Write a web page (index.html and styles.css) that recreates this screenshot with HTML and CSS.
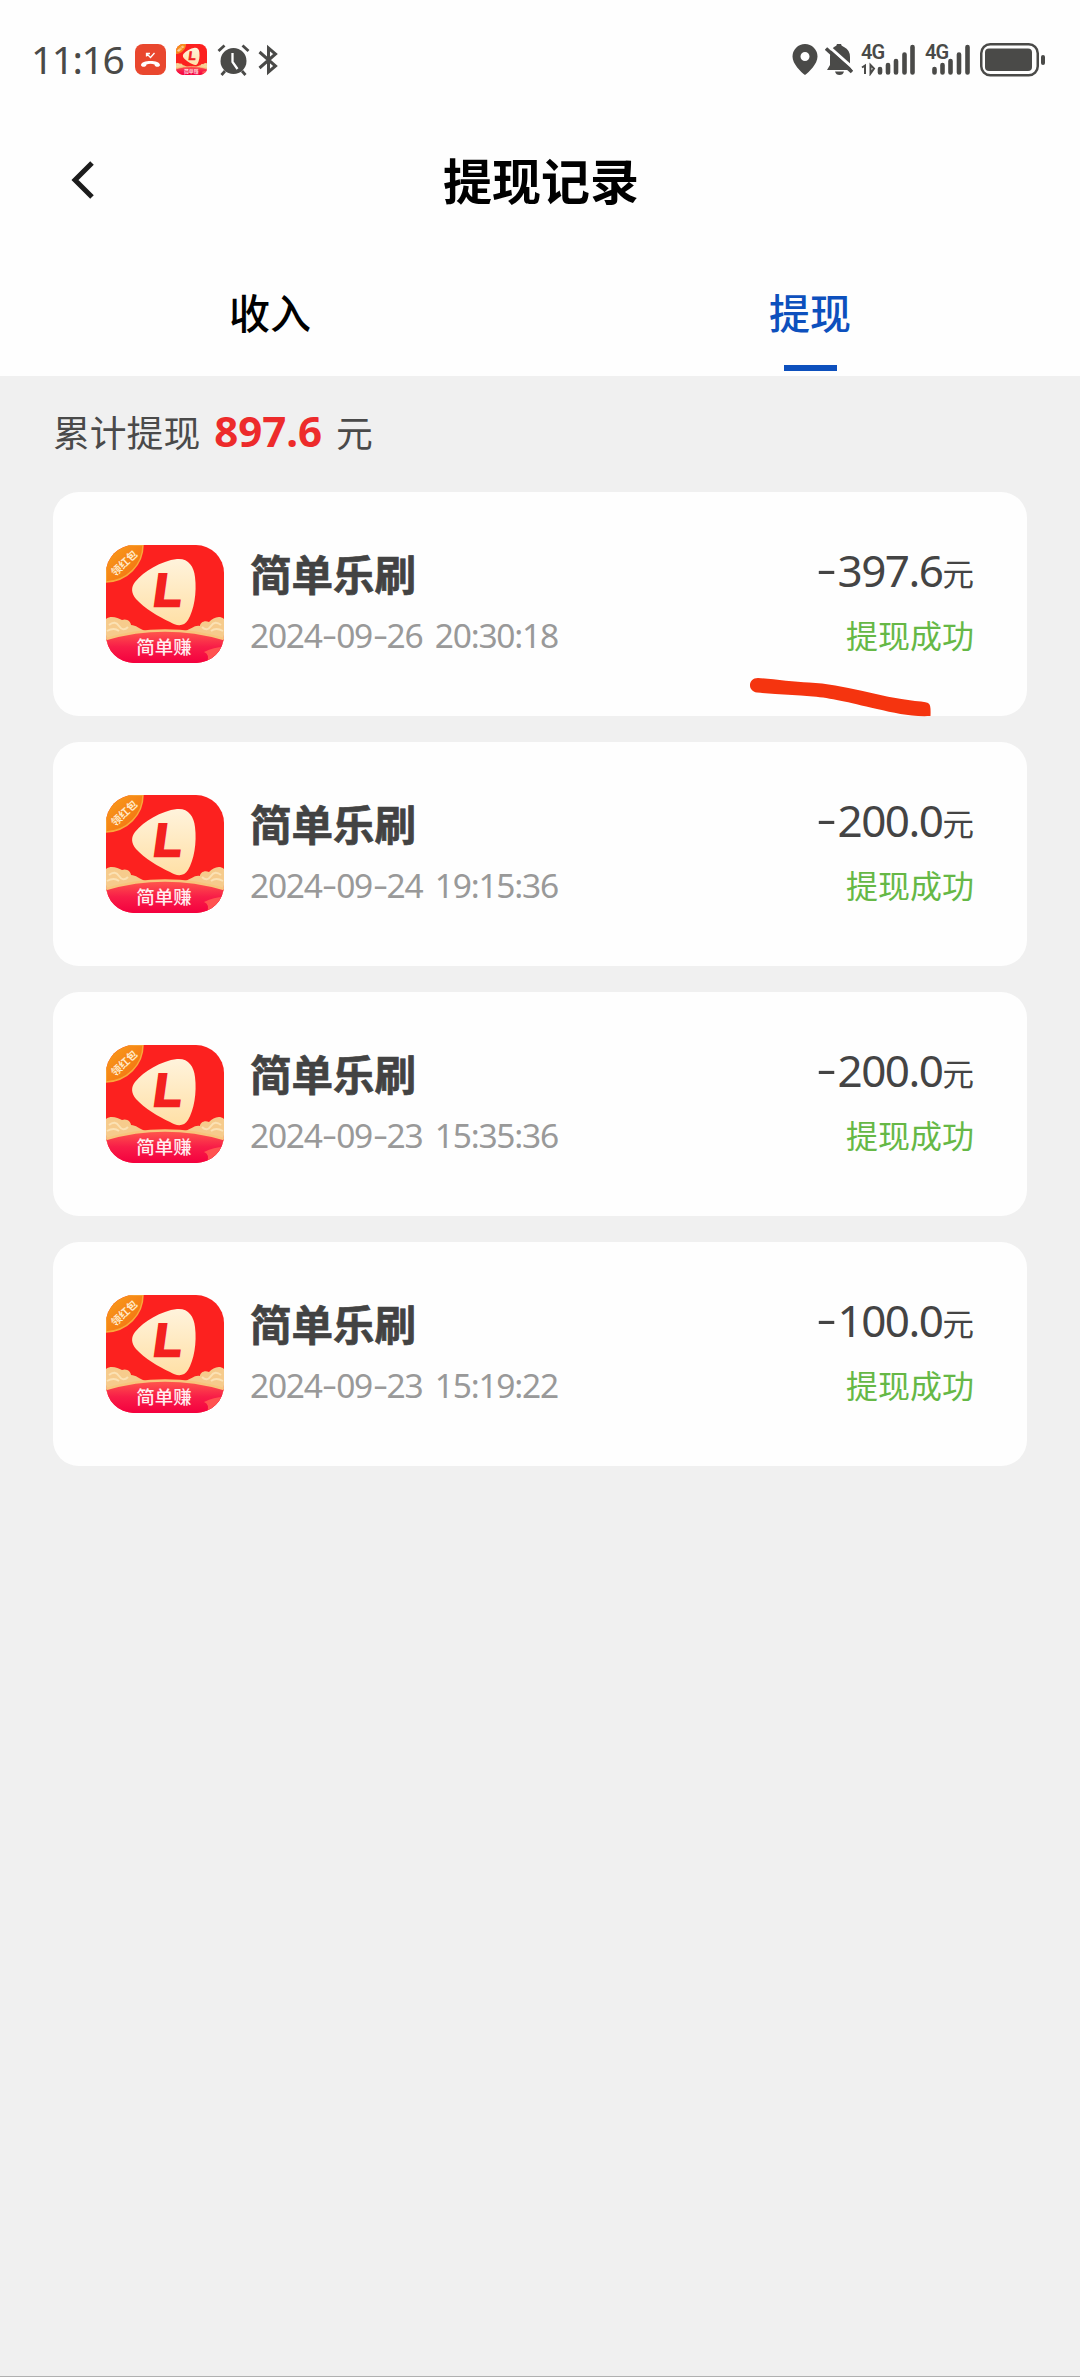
FILE: index.html
```html
<!DOCTYPE html>
<html lang="zh-CN">
<head>
<meta charset="utf-8">
<title>提现记录</title>
<link rel="stylesheet" href="styles.css">
</head>
<body>
<svg class="defs" width="0" height="0" aria-hidden="true">
  <defs>
    <linearGradient id="cream" x1="0" y1="0" x2="0" y2="1"><stop offset="0" stop-color="#fff3dc"/><stop offset="1" stop-color="#ffe0a6"/></linearGradient>
    <linearGradient id="banner" x1="0" y1="0" x2="0" y2="1"><stop offset="0" stop-color="#ff5a4c"/><stop offset=".5" stop-color="#f81e48"/><stop offset="1" stop-color="#f4003f"/></linearGradient>
    <linearGradient id="badge" x1="0" y1="0" x2="1" y2="1"><stop offset="0" stop-color="#f9a01c"/><stop offset="1" stop-color="#f26a10"/></linearGradient>
    <clipPath id="tile"><rect width="118" height="118" rx="28"/></clipPath>
  </defs>
  <symbol id="app" viewBox="0 0 118 118">
    <g clip-path="url(#tile)">
      <rect width="118" height="118" fill="#fc211f"/>
      <path d="M71 14C82 13 88 21 89 32C91 48 88 65 82 75C78 82 70 81 64 77C53 72 38 63 30 54C25 48 25 42 29 37C38 26 55 16 71 14Z" fill="url(#cream)"/>
      <text class="app-letter" transform="translate(46 60.500) skewX(-8)">L</text>
      <path d="M0 74C5 70 12 73 16 75C21 73 25 77 25 80C30 80 33 84 40 86V100H0ZM118 74C113 70 107 73 103 77C98 75 94 78 94 81C88 80 86 84 79 86V100H118Z" fill="#f6cb8c"/>
      <path d="M3 80q6-5 10 1t9 1M1 86q7-4 12 0M115 80q-6-5-10 1t-9 1M117 86q-7-4-12 0" fill="none" stroke="#fbe2b4" stroke-width="2"/>
      <path d="M0 94Q59 77 118 94V118H0Z" fill="url(#banner)"/>
      <path d="M0 94Q59 77 118 94" fill="none" stroke="#f8c57c" stroke-width="2.500"/>
      <path d="M118 102Q108 102 98 107Q104 109 101 118H118Z" fill="#ff5350"/>
      <text class="app-label" x="58" y="109">简单赚</text>
      <path d="M0 0H37C37 20 21 36 0 37Z" fill="url(#badge)" stroke="#f9a83a" stroke-width="1.500"/>
      <text class="app-badge" x="0" y="4" transform="translate(18 18) rotate(-43)">领红包</text>
    </g>
  </symbol>
</svg>

<header class="top">
  <div class="status">
    <div class="status-left">
      <span class="clock">11:16</span>
      <svg width="31" height="31" viewBox="0 0 31 31"><rect width="31" height="31" rx="8" fill="#e9472e"/><path d="M6 21C6 15.500 25 15.500 25 21C25 23.500 19.500 23.500 19.500 20.500Q15.500 19 11.500 20.500C11.500 23.500 6 23.500 6 21Z" fill="#fff"/><path d="M11.500 12.500V9.500h3.500M12 10l3.500 3.500 4-4.500" fill="none" stroke="#fff" stroke-width="1.300"/></svg>
      <svg class="mini-app" width="31" height="31"><use href="#app"/></svg>
      <svg width="33" height="32" viewBox="0 0 33 32" fill="none" stroke="#4a4a48"><circle cx="16.500" cy="17" r="13" fill="#4a4a48" stroke="none"/><path d="M1.500 7l6-5.500M31.500 7l-6-5.500M8 27l-3.500 4M25 27l3.500 4" stroke-width="2.800"/><path d="M15.500 9v9l5 7" stroke="#fff" stroke-width="2.300"/></svg>
      <svg class="bt" width="20" height="32" viewBox="0 0 20 32" fill="none" stroke="#4a4a48" stroke-width="3"><path d="M1.500 8L17.500 22L10.500 28V4L17.500 10L1.500 24"/></svg>
    </div>
    <div class="status-right">
      <svg width="26" height="31" viewBox="0 0 26 31"><path d="M13 0a12.500 12.500 0 0 1 12.500 12.500C25.500 20 17 28 13 31C9 28 .5 20 .5 12.500A12.500 12.500 0 0 1 13 0Zm0 8a4.500 4.500 0 1 0 0 9a4.500 4.500 0 0 0 0-9Z" fill="#4a4a48"/></svg>
      <svg class="bell" width="28" height="31" viewBox="0 0 28 31"><path d="M9 3Q12 2 12 0h4q0 2 3 3q6 3 6 10v9l2 4H2l3-5V13Q5 6 9 3ZM10 27.500h9q-1 3.500-4.500 3.500T10 27.500Z" fill="#4a4a48"/><path d="M2 1L28 24" stroke="#fff" stroke-width="3"/><path d="M1 4.500L27 28" stroke="#4a4a48" stroke-width="3.600"/></svg>
      <svg class="signal" width="55" height="32" viewBox="0 0 55 32"><text class="net" x="0" y="14.500">4G</text><path d="M1 23.500l3-2V30M9.500 21v8.500l3.500-5z" stroke="#4a4a48" stroke-width="2" fill="none"/><g stroke="#4a4a48" stroke-width="4.600" stroke-linecap="round"><path d="M19 25v3.500M27 21v7.500M35 17v11.500M43.500 10.500v18M51.500 3v25.500"/></g></svg>
      <svg class="signal2" width="46" height="32" viewBox="0 0 46 32"><text class="net" x="0" y="14.500">4G</text><g stroke="#4a4a48" stroke-width="4.600" stroke-linecap="round"><path d="M9.500 25v3.500M17.500 21v7.500M25.500 17v11.500M34 10.500v18M42.500 3v25.500"/></g></svg>
      <svg class="battery" width="66" height="34" viewBox="0 0 66 34"><rect x="1.250" y="1.250" width="56.500" height="31" rx="9" fill="none" stroke="#4a4a48" stroke-width="2.500"/><rect x="5" y="5.500" width="47" height="22.500" rx="4" fill="#4a4a48"/><rect x="61" y="12" width="4" height="10" rx="2" fill="#4a4a48"/></svg>
    </div>
  </div>
  <div class="bar">
    <svg class="back" width="23" height="38" viewBox="0 0 23 38"><path d="M21 2L4 19L21 36" fill="none" stroke="#1c1c1c" stroke-width="5"/></svg>
    <h1 class="title">提现记录</h1>
  </div>
  <nav class="tabs">
    <a class="tab">收入</a>
    <a class="tab tab-on">提现</a>
  </nav>
</header>

<main class="content">
  <p class="sum">累计提现<b class="sum-num">897.6</b>元</p>
  <ul class="list">
    <li class="card">
      <svg class="logo"><use href="#app"/></svg>
      <div class="info"><div class="name">简单乐刷</div><time class="date">2024<i>-</i>09<i>-</i>26 20:30:18</time></div>
      <div class="money"><div class="amount"><i>-</i>397.6<small class="unit">元</small></div><div class="state">提现成功</div></div>
      <svg class="mark" width="184" height="41" viewBox="0 0 184 41"><path d="M9 1C24 2 45 5 60 5.500C95 7 130 20 166 24Q180 25 180 27Q182 28 181.500 39C162 40 146 36 128 32C98 25 82 21 64 19.500C46 18 28 17.500 8 15.500C-2 14 -1 1 9 1Z" fill="#f5340f"/></svg>
    </li>
    <li class="card">
      <svg class="logo"><use href="#app"/></svg>
      <div class="info"><div class="name">简单乐刷</div><time class="date">2024<i>-</i>09<i>-</i>24 19:15:36</time></div>
      <div class="money"><div class="amount"><i>-</i>200.0<small class="unit">元</small></div><div class="state">提现成功</div></div>
    </li>
    <li class="card">
      <svg class="logo"><use href="#app"/></svg>
      <div class="info"><div class="name">简单乐刷</div><time class="date">2024<i>-</i>09<i>-</i>23 15:35:36</time></div>
      <div class="money"><div class="amount"><i>-</i>200.0<small class="unit">元</small></div><div class="state">提现成功</div></div>
    </li>
    <li class="card">
      <svg class="logo"><use href="#app"/></svg>
      <div class="info"><div class="name">简单乐刷</div><time class="date">2024<i>-</i>09<i>-</i>23 15:19:22</time></div>
      <div class="money"><div class="amount"><i>-</i>100.0<small class="unit">元</small></div><div class="state">提现成功</div></div>
    </li>
  </ul>
</main>
</body>
</html>
```
FILE: styles.css
```css
* { box-sizing: border-box; }
html, body { margin: 0; height: 2377px; }
body {
  display: flex;
  flex-direction: column;
  background: #f0f0f0;
  border-bottom: 1px solid #b0b0b0;
  font-family: "Noto Sans", "Noto Sans CJK SC", sans-serif;
  color: #444;
}
.defs { position: absolute; }
svg { display: block; flex: none; }
i { font-style: normal; }

.top { height: 376px; background: #fefefe; display: flex; flex-direction: column; }
.status { height: 119px; padding: 0 34px 0 31px; display: flex; justify-content: space-between; align-items: center; color: #4a4a48; }
.status-left, .status-right { display: flex; align-items: center; }
.status-left { gap: 10px; }
.clock { width: 94px; padding-bottom: 2px; font-size: 39px; line-height: 54px; letter-spacing: -1.500px; white-space: nowrap; }
.bt { margin-left: -2px; }
.bell { margin-left: 7px; }
.signal { margin-left: 8px; }
.signal2 { margin-left: 9px; }
.battery { margin-left: 9px; }
.net { font: 600 20px "Roboto", sans-serif; fill: #4a4a48; letter-spacing: -1px; }
.app-letter { font: bold 46px "Liberation Sans", sans-serif; fill: #f3211f; stroke: #f3211f; stroke-width: 2.500px; }
.app-label { font: 500 18.500px "Noto Sans CJK SC", sans-serif; fill: #ffeef0; text-anchor: middle; }
.app-badge { font: bold 10.500px "Noto Sans CJK SC", sans-serif; fill: #ffe9c8; text-anchor: middle; }

.bar { height: 122px; display: grid; grid-template-columns: 94px 1fr 92px; align-items: center; }
.back { justify-self: end; }
.title { margin: 0; padding-bottom: 2px; text-align: center; font: bold 49px/72px "Noto Sans CJK SC", sans-serif; color: #000; }

.tabs { flex: 1; display: flex; }
.tab { flex: 1; display: flex; flex-direction: column; align-items: center; justify-content: space-between; padding: 39px 0 5px; font: 500 41px/62px "Noto Sans CJK SC", sans-serif; color: #000; }
.tab-on { color: #0d50bd; }
.tab-on::after { content: ""; width: 53px; height: 6px; background: #0d50bd; }

.content { padding: 23px 53px 0; }
.sum { margin: 0; height: 64px; display: flex; align-items: center; font: 36.800px/64px "Noto Sans CJK SC", sans-serif; color: #4a4a4a; }
.sum-num { margin: 0 14px; font: bold 42px/64px "Noto Sans", sans-serif; color: #ed2b2b; }
.list { list-style: none; margin: 29.400px 0 0; padding: 0; display: flex; flex-direction: column; gap: 26px; }
.card { position: relative; height: 224px; padding: 0 53px 0 53px; display: flex; align-items: center; background: #fefefe; border-radius: 26px; }
.logo { width: 118px; height: 118px; }
.info { flex: 1; padding-left: 26px; }
.name { font: bold 41.500px/62px "Noto Sans CJK SC", sans-serif; color: #434343; -webkit-text-stroke: .7px #434343; }
.date { display: block; font-size: 33.500px; line-height: 62px; letter-spacing: -1.250px; word-spacing: 5px; color: #999; white-space: nowrap; }
.date i { display: inline-block; transform: translateY(-1px) scaleX(1.400); margin: 0 2.500px; }
.money { text-align: right; padding-bottom: 3px; }
.amount { font-size: 44px; line-height: 62px; letter-spacing: -1.500px; color: #444; white-space: nowrap; }
.amount i { display: inline-block; transform: translateY(-2px) scale(1.450, .9); margin-right: 6px; }
.unit { font: 31.500px/40px "Noto Sans CJK SC", sans-serif; letter-spacing: 0; vertical-align: 1px; }
.state { font: 32px/66px "Noto Sans CJK SC", sans-serif; color: #66b846; }
.mark { position: absolute; left: 696px; top: 185px; }
```
